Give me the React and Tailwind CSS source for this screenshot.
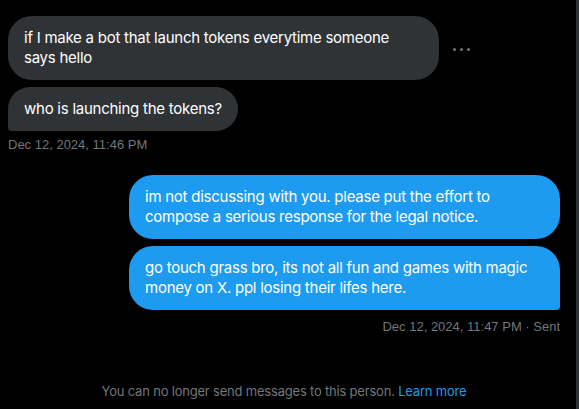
import React from 'react'

const Dots = () => (
  <div className='flex items-center gap-[4px] ml-[14px] mt-[3px]'>
    <span className='block w-[3px] h-[3px] rounded-full bg-[#71767b]'></span>
    <span className='block w-[3px] h-[3px] rounded-full bg-[#71767b]'></span>
    <span className='block w-[3px] h-[3px] rounded-full bg-[#71767b]'></span>
  </div>
)

const App = () => {
  return (
    <div className='w-[579px] h-[409px] bg-black flex overflow-hidden font-["Inter","Noto_Sans",sans-serif]'>
      <div className='w-[576px] flex flex-col px-[8px] pt-[16px]'>
        <div className='flex items-center'>
          <div className='w-[431px] bg-[#2f3336] text-white text-[15px] leading-[20px] tracking-[-0.25px] rounded-[24px] px-[16px] py-[12px]'>
            if I make a bot that launch tokens everytime someone<br />says hello
          </div>
          <Dots />
        </div>
        <div className='flex mt-[7px]'>
          <div className='bg-[#2f3336] text-white text-[15px] leading-[20px] tracking-[-0.25px] rounded-[24px] rounded-bl-[4px] px-[16px] py-[12px]'>
            who is launching the tokens?
          </div>
        </div>
        <div className='text-[13px] leading-[16px] text-[#71767b] mt-[6px] font-["Liberation_Sans",Arial,sans-serif]'>
          Dec 12, 2024, 11:46 PM
        </div>

        <div className='flex flex-col items-end pr-[8px] mt-[22px]'>
          <div className='w-[431px] bg-[#1d9bf0] text-white text-[15px] leading-[20px] tracking-[-0.25px] rounded-[24px] px-[16px] py-[12px]'>
            im not discussing with you. please put the effort to<br />compose a serious response for the legal notice.
          </div>
          <div className='w-[431px] mt-[7px] bg-[#1d9bf0] text-white text-[15px] leading-[20px] tracking-[-0.25px] rounded-[24px] rounded-br-[4px] px-[16px] py-[12px]'>
            go touch grass bro, its not all fun and games with magic<br />money on X. ppl losing their lifes here.
          </div>
          <div className='text-[13px] leading-[16px] text-[#71767b] mt-[9px] font-["Liberation_Sans",Arial,sans-serif]'>
            Dec 12, 2024, 11:47 PM · Sent
          </div>
        </div>

        <div className='mt-auto mb-[10px] text-center text-[13px] leading-[16px] tracking-[-0.2px] text-[#71767b] pr-[8px]'>
          You can no longer send messages to this person. <span className='text-[#1d9bf0]'>Learn more</span>
        </div>
      </div>
      <div className='w-[3px] h-full bg-[#2f3336]'></div>
    </div>
  )
}

export default App
